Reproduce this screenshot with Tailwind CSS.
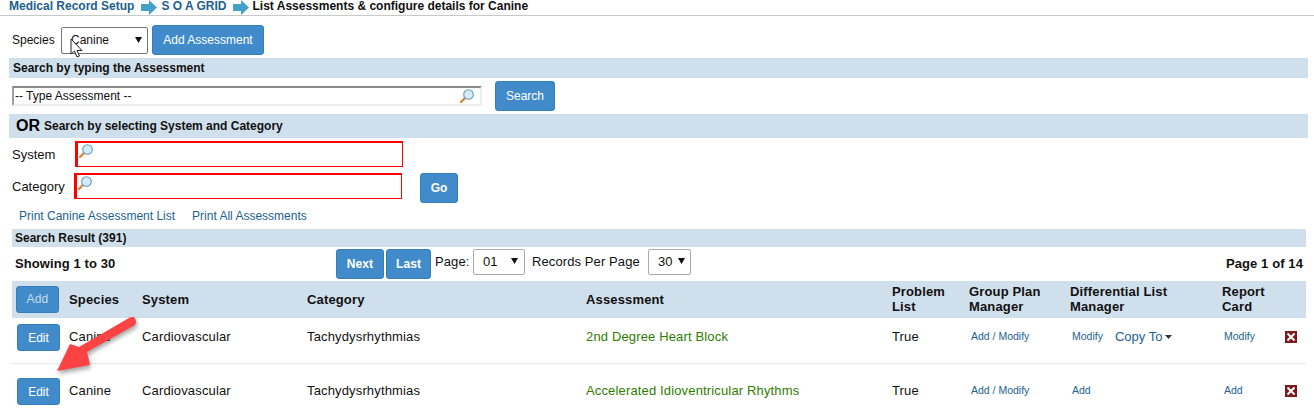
<!DOCTYPE html>
<html><head><meta charset="utf-8"><title>Assessments</title>
<script src="https://cdn.jsdelivr.net/npm/@tailwindcss/browser@4"></script></head>
<body class="bg-white font-['Liberation_Sans',Arial,sans-serif] text-[12px] text-[#111] overflow-hidden">
<div class="relative w-[1314px] h-[412px] overflow-hidden">
  <!-- breadcrumb -->
  <div class="h-[16px] border-b border-[#c8c8c8] pl-[9px] flex items-center font-bold text-[12px] leading-[12px] pb-[3px]">
    <a class="text-[#1c5f8e]">Medical Record Setup</a>
    <svg class="ml-[7px] mr-[4px] self-start" width="16" height="15" viewBox="0 0 16 15"><path d="M0 4h8V0l8 7.5L8 15v-4H0z" fill="#45a0c8"/></svg>
    <a class="text-[#1c5f8e]">S O A GRID</a>
    <svg class="ml-[6px] mr-[4px] self-start" width="16" height="15" viewBox="0 0 16 15"><path d="M0 4h8V0l8 7.5L8 15v-4H0z" fill="#45a0c8"/></svg>
    <span class="text-[#111]">List Assessments &amp; configure details for Canine</span>
  </div>
  <!-- species -->
  <div class="h-[30px] mt-[9px] pl-[12px] flex items-center">
    <span class="w-[49px]">Species</span>
    <div class="relative w-[87px] h-[27px] border border-[#777] rounded-[2px] pl-[9px] flex items-center text-[12px]">Canine
      <svg class="absolute left-[73px] top-[9px]" width="7" height="6" viewBox="0 0 7 6"><path d="M0 0h7L3.5 6z" fill="#111"/></svg>
    </div>
    <button class="ml-[4px] w-[112px] h-[30px] bg-[#428bca] border border-[#357ebd] rounded-[3px] text-white text-[12px]">Add Assessment</button>
  </div>
  <!-- band 1 -->
  <div class="mt-[3px] ml-[9px] w-[1299px] h-[20px] bg-[#d0dfec] pl-[4px] flex items-center font-bold text-[12px]">Search by typing the Assessment</div>
  <!-- type search -->
  <div class="mt-[3px] h-[30px] ml-[12px] flex items-center">
    <div class="relative w-[470px] h-[20px] border-2 border-t-[#8a8a8a] border-l-[#a0a0a0] border-b-[#eee] border-r-[#eee] flex items-center pl-[1px] text-[12px]">-- Type Assessment --
      <svg class="absolute left-[445px] top-[1px]" width="15" height="15" viewBox="0 0 15 15"><line x1="2" y1="13" x2="6" y2="9" stroke="#d8893a" stroke-width="2.4" stroke-linecap="round"/><circle cx="9.5" cy="5.5" r="4.8" fill="#d4ecf9" stroke="#6d9ab8" stroke-width="1.1"/></svg>
    </div>
    <button class="ml-[13px] w-[60px] h-[30px] bg-[#428bca] border border-[#357ebd] rounded-[3px] text-white text-[12px]">Search</button>
  </div>
  <!-- band 2 -->
  <div class="mt-[3px] ml-[9px] w-[1299px] h-[24px] bg-[#d0dfec] pl-[7px] flex items-center gap-[4px] font-bold text-[12px]"><span class="text-[16px] text-black">OR</span> Search by selecting System and Category</div>
  <!-- system -->
  <div class="mt-[3px] h-[26px] pl-[12px] flex items-center">
    <span class="w-[63px] pt-[1px] text-[13px]">System</span>
    <div class="relative w-[328px] h-[26px] border border-l-[3px] border-t-2 border-[#f00]">
      <svg class="absolute left-[0px] top-[1px]" width="15" height="15" viewBox="0 0 15 15"><line x1="2" y1="13" x2="6" y2="9" stroke="#d8893a" stroke-width="2.4" stroke-linecap="round"/><circle cx="9.5" cy="5.5" r="4.8" fill="#d4ecf9" stroke="#6d9ab8" stroke-width="1.1"/></svg>
    </div>
  </div>
  <!-- category -->
  <div class="mt-[6px] h-[30px] pl-[12px] flex items-start">
    <span class="w-[62px] h-[26px] pt-[1px] flex items-center text-[13px]">Category</span>
    <div class="relative w-[328px] h-[26px] border border-l-[3px] border-t-2 border-[#f00]">
      <svg class="absolute left-[0px] top-[1px]" width="15" height="15" viewBox="0 0 15 15"><line x1="2" y1="13" x2="6" y2="9" stroke="#d8893a" stroke-width="2.4" stroke-linecap="round"/><circle cx="9.5" cy="5.5" r="4.8" fill="#d4ecf9" stroke="#6d9ab8" stroke-width="1.1"/></svg>
    </div>
    <button class="ml-[18px] w-[38px] h-[30px] bg-[#428bca] border border-[#357ebd] rounded-[3px] text-white font-bold text-[12px]">Go</button>
  </div>
  <!-- links -->
  <div class="h-[26px] pl-[19px] flex items-center gap-[17px] text-[#1c6291]"><a>Print Canine Assessment List</a><a>Print All Assessments</a></div>
  <!-- result band -->
  <div class="ml-[12px] w-[1294px] h-[18px] bg-[#d0dfec] pl-[3px] flex items-center font-bold text-[12px]">Search Result (391)</div>
  <!-- pager -->
  <div class="relative mt-[2px] h-[30px] ml-[15px] w-[1288px] flex items-start text-[13px] tracking-[0.1px]">
    <b class="w-[321px] h-[29px] flex items-center">Showing 1 to 30</b>
    <button class="w-[48px] h-[30px] bg-[#428bca] border border-[#357ebd] rounded-[3px] text-white font-bold text-[12px]">Next</button>
    <button class="ml-[2px] w-[45px] h-[30px] bg-[#428bca] border border-[#357ebd] rounded-[3px] text-white font-bold text-[12px]">Last</button>
    <span class="ml-[4px] w-[38px] h-[26px] flex items-center">Page:</span>
    <div class="relative w-[52px] h-[26px] border border-[#aaa] rounded-[2px] pl-[9px] flex items-center">01
      <svg class="absolute left-[37px] top-[8px]" width="7" height="6" viewBox="0 0 7 6"><path d="M0 0h7L3.5 6z" fill="#111"/></svg>
    </div>
    <span class="ml-[7px] w-[116px] h-[26px] flex items-center">Records Per Page</span>
    <div class="relative w-[43px] h-[26px] border border-[#aaa] rounded-[2px] pl-[9px] flex items-center">30
      <svg class="absolute left-[29px] top-[8px]" width="7" height="6" viewBox="0 0 7 6"><path d="M0 0h7L3.5 6z" fill="#111"/></svg>
    </div>
    <b class="ml-auto h-[29px] flex items-center">Page 1 of 14</b>
  </div>
  <!-- table -->
  <div class="mt-[2px] ml-[12px] w-[1294px] text-[13px] tracking-[0.15px]">
    <div class="grid grid-cols-[57px_73px_165px_279px_306px_77px_101px_152px_84px] items-center h-[37px] bg-[#d0dfec] font-bold leading-[15px]">
      <div class="pl-[4px]"><button class="w-[43px] h-[27px] bg-[#428bca] border border-[#357ebd] rounded-[3px] text-[#c7dcef] font-normal text-[12px]">Add</button></div>
      <div>Species</div><div>System</div><div>Category</div><div>Assessment</div>
      <div class="mb-[2px]">Problem<br>List</div><div class="mb-[2px]">Group Plan<br>Manager</div><div class="mb-[2px]">Differential List<br>Manager</div><div class="mb-[2px]">Report<br>Card</div>
    </div>
    <div class="grid grid-cols-[57px_73px_165px_279px_306px_77px_101px_152px_84px] items-start h-[46px] border-b border-[#e8e8e8] pt-[6px]">
      <div class="pl-[5px]"><button class="w-[43px] h-[27px] bg-[#428bca] border border-[#357ebd] rounded-[3px] text-white text-[12px] tracking-normal">Edit</button></div>
      <div class="h-[26px] flex items-center">Canine</div><div class="h-[26px] flex items-center">Cardiovascular</div><div class="h-[26px] flex items-center">Tachydysrhythmias</div>
      <div class="h-[26px] flex items-center text-[#2f7d00]">2nd Degree Heart Block</div>
      <div class="h-[26px] flex items-center">True</div>
      <div class="h-[26px] flex items-center pl-[2px] text-[10.5px] tracking-normal text-[#1c6291]">Add / Modify</div>
      <div class="h-[26px] flex items-center pl-[2px] text-[10.5px] tracking-normal text-[#1c6291]">Modify<span class="ml-[12px] text-[13px]">Copy To</span><svg class="ml-[3px]" width="7" height="4" viewBox="0 0 7 4"><path d="M0 0h7L3.5 4z" fill="#333"/></svg></div>
      <div class="h-[26px] flex items-center justify-between pl-[2px] pr-[9px] text-[10.5px] tracking-normal text-[#1c6291]">Modify<svg width="12" height="12" viewBox="0 0 12 12"><rect width="12" height="12" fill="#7a1a1a"/><path d="M2.5 2.5l7 7M9.5 2.5l-7 7" stroke="#fff" stroke-width="2"/></svg></div>
    </div>
    <div class="grid grid-cols-[57px_73px_165px_279px_306px_77px_101px_152px_84px] items-start h-[46px] pt-[14px]">
      <div class="pl-[5px]"><button class="w-[43px] h-[27px] bg-[#428bca] border border-[#357ebd] rounded-[3px] text-white text-[12px] tracking-normal">Edit</button></div>
      <div class="h-[25px] flex items-center">Canine</div><div class="h-[25px] flex items-center">Cardiovascular</div><div class="h-[25px] flex items-center">Tachydysrhythmias</div>
      <div class="h-[25px] flex items-center text-[#2f7d00]">Accelerated Idioventricular Rhythms</div>
      <div class="h-[25px] flex items-center">True</div>
      <div class="h-[25px] flex items-center pl-[2px] text-[10.5px] tracking-normal text-[#1c6291]">Add / Modify</div>
      <div class="h-[25px] flex items-center pl-[2px] text-[10.5px] tracking-normal text-[#1c6291]">Add</div>
      <div class="h-[25px] flex items-center justify-between pl-[2px] pr-[9px] text-[10.5px] tracking-normal text-[#1c6291]">Add<svg width="12" height="12" viewBox="0 0 12 12"><rect width="12" height="12" fill="#7a1a1a"/><path d="M2.5 2.5l7 7M9.5 2.5l-7 7" stroke="#fff" stroke-width="2"/></svg></div>
    </div>
  </div>
  <!-- annotation arrow -->
  <svg class="absolute left-0 top-0 pointer-events-none" width="1314" height="412" viewBox="0 0 1314 412">
    <path class="drop-shadow-[1px_3px_2px_rgba(0,0,0,0.35)]" d="M129 318 Q133 316 135 318 Q137 322 135 325 L87 352 L90 365 L57 371 L70 344 L79 347 Z" fill="#fb4344"/>
    <!-- cursor -->
    <path d="M71 39 V54 L74.5 51 L77 57 L79.5 56 L77 50.5 L82 50.5 Z" fill="#fff" stroke="#222" stroke-width="1"/>
  </svg>
</div>
</body></html>
